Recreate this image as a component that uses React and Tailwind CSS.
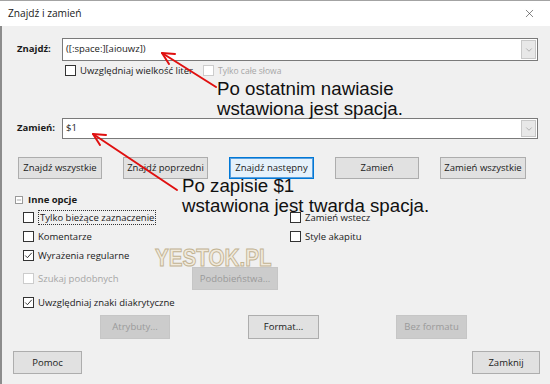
import React from "react";
import { X, ChevronDown, Minus } from "lucide-react";

function Box({ checked = false, disabled = false }) {
  return (
    <span
      className={
        disabled
          ? "flex h-[11px] w-[11px] shrink-0 items-center justify-center border border-[#cccccc] bg-white"
          : "flex h-[11px] w-[11px] shrink-0 items-center justify-center border border-[#333333] bg-white"
      }
    >
      {checked ? (
        <svg viewBox="0 0 11 11" className="h-[9px] w-[9px]">
          <path d="M1.5 5.5 L4.2 8.2 L9.5 2.2" fill="none" stroke="#222" strokeWidth="1.1" />
        </svg>
      ) : null}
    </span>
  );
}

function Check({ label, checked, disabled, focus, className = "" }) {
  return (
    <div className={`flex items-center gap-[4px] ${className}`}>
      <Box checked={checked} disabled={disabled} />
      <span
        className={
          focus
            ? "border border-dotted border-[#333] px-[1px] leading-[13px] text-[#1a1a1a]"
            : disabled
            ? "leading-[13px] text-[#a6a6a6]"
            : "leading-[13px] text-[#1a1a1a]"
        }
      >
        {label}
      </span>
    </div>
  );
}

function Btn({ children, disabled, focus, className = "" }) {
  let look = "border-[#adadad] bg-[#e1e1e1] text-[#1a1a1a]";
  if (disabled) look = "border-[#c6c6c6] bg-[#cccccc] text-[#9a9a9a]";
  if (focus) look = "border-[#0078d7] bg-[#e5f1fb] text-[#1a1a1a] shadow-[inset_0_0_0_1px_#5aa0de]";
  return (
    <div className={`flex items-center justify-center border ${look} ${className}`}>{children}</div>
  );
}

function Combo({ value, className = "" }) {
  return (
    <div className={`flex items-stretch border border-[#7a7a7a] bg-white ${className}`}>
      <div className="flex flex-1 items-center pl-[3px] text-[#1a1a1a]">{value}</div>
      <div className="m-[1px] flex w-[15px] items-center justify-center border border-[#c8c8c8] bg-[#e8e8e8]">
        <ChevronDown size={10} strokeWidth={1.2} color="#7a7a7a" />
      </div>
    </div>
  );
}

export default function App() {
  return (
    <div className="relative h-[384px] w-[550px] overflow-hidden border-t border-[#a3a3a3] bg-[#f0f0f0] font-['Open_Sans',sans-serif] text-[9.5px] shadow-[inset_2px_0_0_#8c8c8c]">
      <div className="flex h-[25px] items-center justify-between bg-white pl-[8px] pr-[14px]">
        <span className="text-[10.2px] text-[#1a1a1a]">Znajdź i zamień</span>
        <X size={13} strokeWidth={1.1} color="#333" />
      </div>

      <div className="flex items-center pl-[17px] pt-[12px]">
        <span className="w-[45px] font-bold text-[#1a1a1a]">Znajdź:</span>
        <Combo value="([:space:][aiouwz])" className="h-[23px] w-[476px]" />
      </div>

      <div className="mt-[3px] flex items-center pl-[65px]">
        <Check label="Uwzględniaj wielkość liter" className="w-[138px]" />
        <Check label="Tylko całe słowa" disabled className="text-[8.5px]" />
      </div>

      <div className="mt-[41px] flex items-center pl-[17px]">
        <span className="w-[45px] font-bold text-[#1a1a1a]">Zamień:</span>
        <Combo value="$1" className="h-[21px] w-[476px]" />
      </div>

      <div className="mt-[18px] flex gap-[21px] pl-[18px]">
        <Btn className="h-[22px] w-[84px]">Znajdź wszystkie</Btn>
        <Btn className="h-[22px] w-[85px]">Znajdź poprzedni</Btn>
        <Btn focus className="h-[22px] w-[85px]">Znajdź następny</Btn>
        <Btn className="h-[22px] w-[84px]">Zamień</Btn>
        <Btn className="h-[22px] w-[86px]">Zamień wszystkie</Btn>
      </div>

      <div className="mt-[14px] flex items-center gap-[5px] pl-[15px]">
        <span className="flex h-[8px] w-[8px] items-center justify-center border border-[#9a9a9a] bg-white">
          <Minus size={6} strokeWidth={2} color="#555" />
        </span>
        <span className="font-bold text-[#1a1a1a]">Inne opcje</span>
      </div>

      <div className="mt-[1px] flex flex-col pl-[23px]">
        <div className="flex h-[19px] items-center">
          <Check label="Tylko bieżące zaznaczenie" focus className="w-[267px]" />
          <Check label="Zamień wstecz" />
        </div>
        <div className="flex h-[19px] items-center">
          <Check label="Komentarze" className="w-[267px]" />
          <Check label="Style akapitu" />
        </div>
        <div className="flex h-[18px] items-center">
          <Check label="Wyrażenia regularne" checked />
        </div>
        <div className="mt-[3px] flex h-[23px] items-center">
          <Check label="Szukaj podobnych" disabled className="w-[169px]" />
          <Btn disabled className="h-[23px] w-[86px]">Podobieństwa...</Btn>
        </div>
        <div className="mt-[1px] flex h-[23px] items-center">
          <Check label="Uwzględniaj znaki diakrytyczne" checked />
        </div>
      </div>

      <div className="mt-[1px] flex pl-[100px]">
        <Btn disabled className="h-[24px] w-[70px]">Atrybuty...</Btn>
        <Btn className="ml-[78px] h-[24px] w-[71px]">Format...</Btn>
        <Btn disabled className="ml-[77px] h-[24px] w-[71px]">Bez formatu</Btn>
      </div>

      <div className="mt-[12px] flex justify-between pl-[13px] pr-[10px]">
        <Btn className="h-[23px] w-[69px]">Pomoc</Btn>
        <Btn className="h-[23px] w-[68px]">Zamknij</Btn>
      </div>

      <div className="pointer-events-none absolute left-[155px] top-[243px] origin-left scale-x-[0.86] font-['Liberation_Sans',sans-serif] text-[24px] font-bold leading-[28px] text-[#f1eadc] [-webkit-text-stroke:1px_#c2b392]">
        YESTOK.PL
      </div>

      <div className="pointer-events-none absolute left-[217px] top-[78px] font-['Liberation_Sans',sans-serif] text-[18.7px] leading-[20px] text-[#111]">
        <div>Po ostatnim nawiasie</div>
        <div>wstawiona jest spacja.</div>
      </div>

      <div className="pointer-events-none absolute left-[182px] top-[175px] font-['Liberation_Sans',sans-serif] text-[18.7px] leading-[20px] text-[#111]">
        <div>Po zapisie $1</div>
        <div>wstawiona jest twarda spacja.</div>
      </div>

      <svg className="pointer-events-none absolute left-0 top-0" width="550" height="384">
        <g stroke="#e01010" strokeWidth="2" fill="none" strokeLinecap="round">
          <path d="M216 86 L162 52" />
          <path d="M162 52 L175 53 M162 52 L169 63" />
          <path d="M177 189 L93 133" />
          <path d="M93 133 L106 134 M93 133 L100 144" />
        </g>
      </svg>
    </div>
  );
}
